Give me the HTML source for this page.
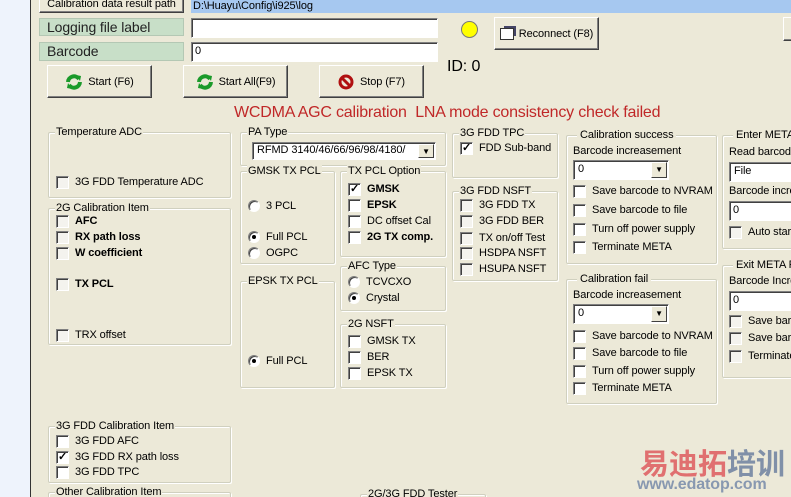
<!DOCTYPE html>
<html><head><meta charset="utf-8"><style>
*{box-sizing:border-box;margin:0;padding:0}
html{width:791px;height:497px;overflow:hidden}
body{width:791px;height:497px;overflow:hidden;background:#ece9d8;font-family:"Liberation Sans",sans-serif;font-size:11px;letter-spacing:-0.1px;color:#000;position:relative}
.a{position:absolute;white-space:nowrap}
.g{position:absolute;border:1px solid #d0d0bf;border-radius:2px;box-shadow:inset 1px 1px 0 #fff,1px 1px 0 #fff}
.g>.t{position:absolute;top:-8px;left:6px;background:#ece9d8;padding:0 1px;line-height:14px}
.cb{position:absolute;white-space:nowrap;line-height:13px}
.cb i{display:inline-block;width:13px;height:13px;background:#fff;border:1px solid;border-color:#808080 #fff #fff #808080;box-shadow:inset 1px 1px 0 #404040;vertical-align:top;margin-right:6px;position:relative;font-style:normal;font-size:11px;line-height:11px;text-align:center;font-weight:bold}
.cb.d i{background:#f4f3ee}
.rb i{display:inline-block;width:12px;height:12px;border-radius:50%;background:#fff;border:1px solid;border-color:#808080 #fff #fff #808080;vertical-align:top;margin-right:6px;position:relative}
.rb i.s::after{content:"";position:absolute;left:3px;top:3px;width:4px;height:4px;border-radius:50%;background:#000}
.b{font-weight:bold}
.btn{position:absolute;background:#ece9d8;border:1px solid;border-color:#fff #404040 #404040 #fff;box-shadow:inset -1px -1px 0 #808080;display:flex;align-items:center;justify-content:center;font-size:11px}
.inp{position:absolute;background:#fff;border:1px solid;border-color:#808080 #fff #fff #808080;box-shadow:inset 1px 1px 0 #404040;padding-left:3px;line-height:17px}
.combo{position:absolute;background:#fff;border:1px solid;border-color:#808080 #fff #fff #808080;box-shadow:inset 1px 1px 0 #404040;padding-left:4px;line-height:17px}
.combo b{position:absolute;right:1px;top:1px;bottom:1px;width:16px;background:#ece9d8;border:1px solid;border-color:#fff #404040 #404040 #fff;font-size:8px;text-align:center;line-height:14px;font-weight:normal}
</style></head><body>
<div class="a" style="left:0;top:0;width:31px;height:497px;background:#eef3fc;border-right:1px solid #333"></div>

<div class="btn" style="left:39px;top:-6px;width:145px;height:19px">Calibration data result path</div>
<div class="a" style="left:191px;top:0;width:600px;height:13px;background:#a6c8f0;line-height:12px;padding-left:2px">D:\Huayu\Config\i925\log</div>
<div class="a" style="left:39px;top:18px;width:145px;height:18px;background:#c8dfc8;border:1px solid #b4c8b4;font-size:14px;line-height:16px;padding-left:7px;color:#222">Logging file label</div>
<div class="a" style="left:39px;top:42px;width:145px;height:19px;background:#c8dfc8;border:1px solid #b4c8b4;font-size:14px;line-height:17px;padding-left:7px;color:#222">Barcode</div>
<div class="inp" style="left:191px;top:18px;width:247px;height:20px"></div>
<div class="inp" style="left:191px;top:42px;width:247px;height:20px">0</div>
<div class="a" style="left:461px;top:21px;width:17px;height:17px;border-radius:50%;background:#ffff00;border:1px solid #777"></div>
<div class="btn" style="left:494px;top:17px;width:105px;height:33px"><span style="display:inline-block;width:14px;height:12px;border:1px solid #333;background:#fff;margin-right:5px;box-shadow:3px -3px 0 -1px #446"></span>Reconnect (F8)</div>
<div class="btn" style="left:783px;top:17px;width:20px;height:24px"></div>
<div class="a" style="left:447px;top:58px;font-size:16px">ID: 0</div>

<div class="btn" style="left:47px;top:65px;width:105px;height:33px"><svg width="18" height="16" viewBox="0 0 18 16" style="margin-right:5px"><path d="M3 8a6 6 0 0 1 11-3" stroke="#1a9a2a" stroke-width="4" fill="none"/><path d="M11 1l5 1-1 5z" fill="#1a9a2a"/><path d="M15 8a6 6 0 0 1-11 3" stroke="#1a9a2a" stroke-width="4" fill="none"/><path d="M7 15l-5-1 1-5z" fill="#1a9a2a"/></svg>Start (F6)</div>
<div class="btn" style="left:183px;top:65px;width:105px;height:33px"><svg width="18" height="16" viewBox="0 0 18 16" style="margin-right:5px"><path d="M3 8a6 6 0 0 1 11-3" stroke="#1a9a2a" stroke-width="4" fill="none"/><path d="M11 1l5 1-1 5z" fill="#1a9a2a"/><path d="M15 8a6 6 0 0 1-11 3" stroke="#1a9a2a" stroke-width="4" fill="none"/><path d="M7 15l-5-1 1-5z" fill="#1a9a2a"/></svg>Start All(F9)</div>
<div class="btn" style="left:319px;top:65px;width:105px;height:33px"><svg width="16" height="16" viewBox="0 0 16 16" style="margin-right:6px"><circle cx="8" cy="8" r="6" stroke="#b01010" stroke-width="3" fill="none"/><path d="M4 4l8 8" stroke="#b01010" stroke-width="3"/></svg>Stop (F7)</div>

<div class="a" style="left:234px;top:104px;font-size:16px;letter-spacing:-0.2px;color:#c02828">WCDMA AGC calibration&nbsp; LNA mode consistency check failed</div>

<div class="g" style="left:48px;top:132px;width:183px;height:66px"><span class="t">Temperature ADC</span></div>
<div class="cb d" style="left:56px;top:176px"><i></i>3G FDD Temperature ADC</div>

<div class="g" style="left:48px;top:208px;width:183px;height:137px"><span class="t">2G Calibration Item</span></div>
<div class="cb d b" style="left:56px;top:215px"><i></i>AFC</div>
<div class="cb d b" style="left:56px;top:231px"><i></i>RX path loss</div>
<div class="cb d b" style="left:56px;top:247px"><i></i>W coefficient</div>
<div class="cb d b" style="left:56px;top:278px"><i></i>TX PCL</div>
<div class="cb d" style="left:56px;top:329px"><i></i>TRX offset</div>

<div class="g" style="left:240px;top:132px;width:206px;height:34px"><span class="t">PA Type</span></div>
<div class="combo" style="left:252px;top:142px;width:184px;height:18px;line-height:15px">RFMD 3140/46/66/96/98/4180/<b>▼</b></div>

<div class="g" style="left:240px;top:171px;width:95px;height:93px"><span class="t">GMSK TX PCL</span></div>
<div class="cb rb" style="left:248px;top:200px"><i></i>3 PCL</div>
<div class="cb rb" style="left:248px;top:231px"><i class="s"></i>Full PCL</div>
<div class="cb rb" style="left:248px;top:247px"><i></i>OGPC</div>

<div class="g" style="left:340px;top:171px;width:106px;height:86px"><span class="t">TX PCL Option</span></div>
<div class="cb b" style="left:348px;top:183px"><i>✓</i>GMSK</div>
<div class="cb b" style="left:348px;top:199px"><i></i>EPSK</div>
<div class="cb" style="left:348px;top:215px"><i></i>DC offset Cal</div>
<div class="cb b" style="left:348px;top:231px"><i></i>2G TX comp.</div>

<div class="g" style="left:240px;top:281px;width:95px;height:107px"><span class="t">EPSK TX PCL</span></div>
<div class="cb rb" style="left:248px;top:355px"><i class="s"></i>Full PCL</div>

<div class="g" style="left:340px;top:266px;width:106px;height:45px"><span class="t">AFC Type</span></div>
<div class="cb rb" style="left:348px;top:276px"><i></i>TCVCXO</div>
<div class="cb rb" style="left:348px;top:292px"><i class="s"></i>Crystal</div>

<div class="g" style="left:340px;top:324px;width:106px;height:64px"><span class="t">2G NSFT</span></div>
<div class="cb" style="left:348px;top:335px"><i></i>GMSK TX</div>
<div class="cb" style="left:348px;top:351px"><i></i>BER</div>
<div class="cb" style="left:348px;top:367px"><i></i>EPSK TX</div>

<div class="g" style="left:452px;top:133px;width:106px;height:45px"><span class="t">3G FDD TPC</span></div>
<div class="cb" style="left:460px;top:142px"><i>✓</i>FDD Sub-band</div>

<div class="g" style="left:452px;top:191px;width:106px;height:90px"><span class="t">3G FDD NSFT</span></div>
<div class="cb d" style="left:460px;top:199px"><i></i>3G FDD TX</div>
<div class="cb d" style="left:460px;top:215px"><i></i>3G FDD BER</div>
<div class="cb d" style="left:460px;top:232px"><i></i>TX on/off Test</div>
<div class="cb d" style="left:460px;top:247px"><i></i>HSDPA NSFT</div>
<div class="cb d" style="left:460px;top:263px"><i></i>HSUPA NSFT</div>

<div class="g" style="left:566px;top:135px;width:151px;height:129px"><span class="t" style="left:10px;padding:0 3px">Calibration success</span></div>
<div class="a" style="left:573px;top:145px">Barcode increasement</div>
<div class="combo" style="left:573px;top:160px;width:96px;height:20px">0<b>▼</b></div>
<div class="cb" style="left:573px;top:185px"><i></i>Save barcode to NVRAM</div>
<div class="cb" style="left:573px;top:204px"><i></i>Save barcode to file</div>
<div class="cb" style="left:573px;top:223px"><i></i>Turn off power supply</div>
<div class="cb" style="left:573px;top:241px"><i></i>Terminate META</div>

<div class="g" style="left:566px;top:279px;width:151px;height:125px"><span class="t" style="left:10px;padding:0 3px">Calibration fail</span></div>
<div class="a" style="left:573px;top:289px">Barcode increasement</div>
<div class="combo" style="left:573px;top:304px;width:96px;height:20px">0<b>▼</b></div>
<div class="cb" style="left:573px;top:330px"><i></i>Save barcode to NVRAM</div>
<div class="cb" style="left:573px;top:347px"><i></i>Save barcode to file</div>
<div class="cb" style="left:573px;top:365px"><i></i>Turn off power supply</div>
<div class="cb" style="left:573px;top:382px"><i></i>Terminate META</div>

<div class="g" style="left:722px;top:135px;width:80px;height:114px"><span class="t" style="left:10px;padding:0 3px">Enter META</span></div>
<div class="a" style="left:729px;top:146px">Read barcode</div>
<div class="combo" style="left:729px;top:162px;width:70px;height:20px">File</div>
<div class="a" style="left:729px;top:185px">Barcode incre</div>
<div class="inp" style="left:729px;top:201px;width:70px;height:20px">0</div>
<div class="cb d" style="left:729px;top:226px"><i></i>Auto start</div>

<div class="g" style="left:722px;top:265px;width:80px;height:113px"><span class="t" style="left:10px;padding:0 3px">Exit META F</span></div>
<div class="a" style="left:729px;top:275px">Barcode Incre</div>
<div class="inp" style="left:729px;top:291px;width:70px;height:20px">0</div>
<div class="cb d" style="left:729px;top:315px"><i></i>Save bar</div>
<div class="cb d" style="left:729px;top:332px"><i></i>Save bar</div>
<div class="cb d" style="left:729px;top:350px"><i></i>Terminate</div>

<div class="g" style="left:48px;top:426px;width:183px;height:57px"><span class="t">3G FDD Calibration Item</span></div>
<div class="cb" style="left:56px;top:435px"><i></i>3G FDD AFC</div>
<div class="cb" style="left:56px;top:451px"><i>✓</i>3G FDD RX path loss</div>
<div class="cb" style="left:56px;top:466px"><i></i>3G FDD TPC</div>

<div class="g" style="left:48px;top:492px;width:183px;height:20px"><span class="t">Other Calibration Item</span></div>
<div class="g" style="left:360px;top:494px;width:126px;height:20px"><span class="t">2G/3G FDD Tester</span></div>

<div class="a" style="left:640px;top:446px;font-size:29px;font-weight:bold;letter-spacing:0;font-family:'Noto Sans CJK SC',sans-serif;line-height:32px"><span style="color:#e07070">易迪拓</span><span style="color:#8090a8">培训</span></div>
<div class="a" style="left:637px;top:476px;font-size:16px;font-weight:bold;color:#8898b0">www.edatop.com</div>
</body></html>
